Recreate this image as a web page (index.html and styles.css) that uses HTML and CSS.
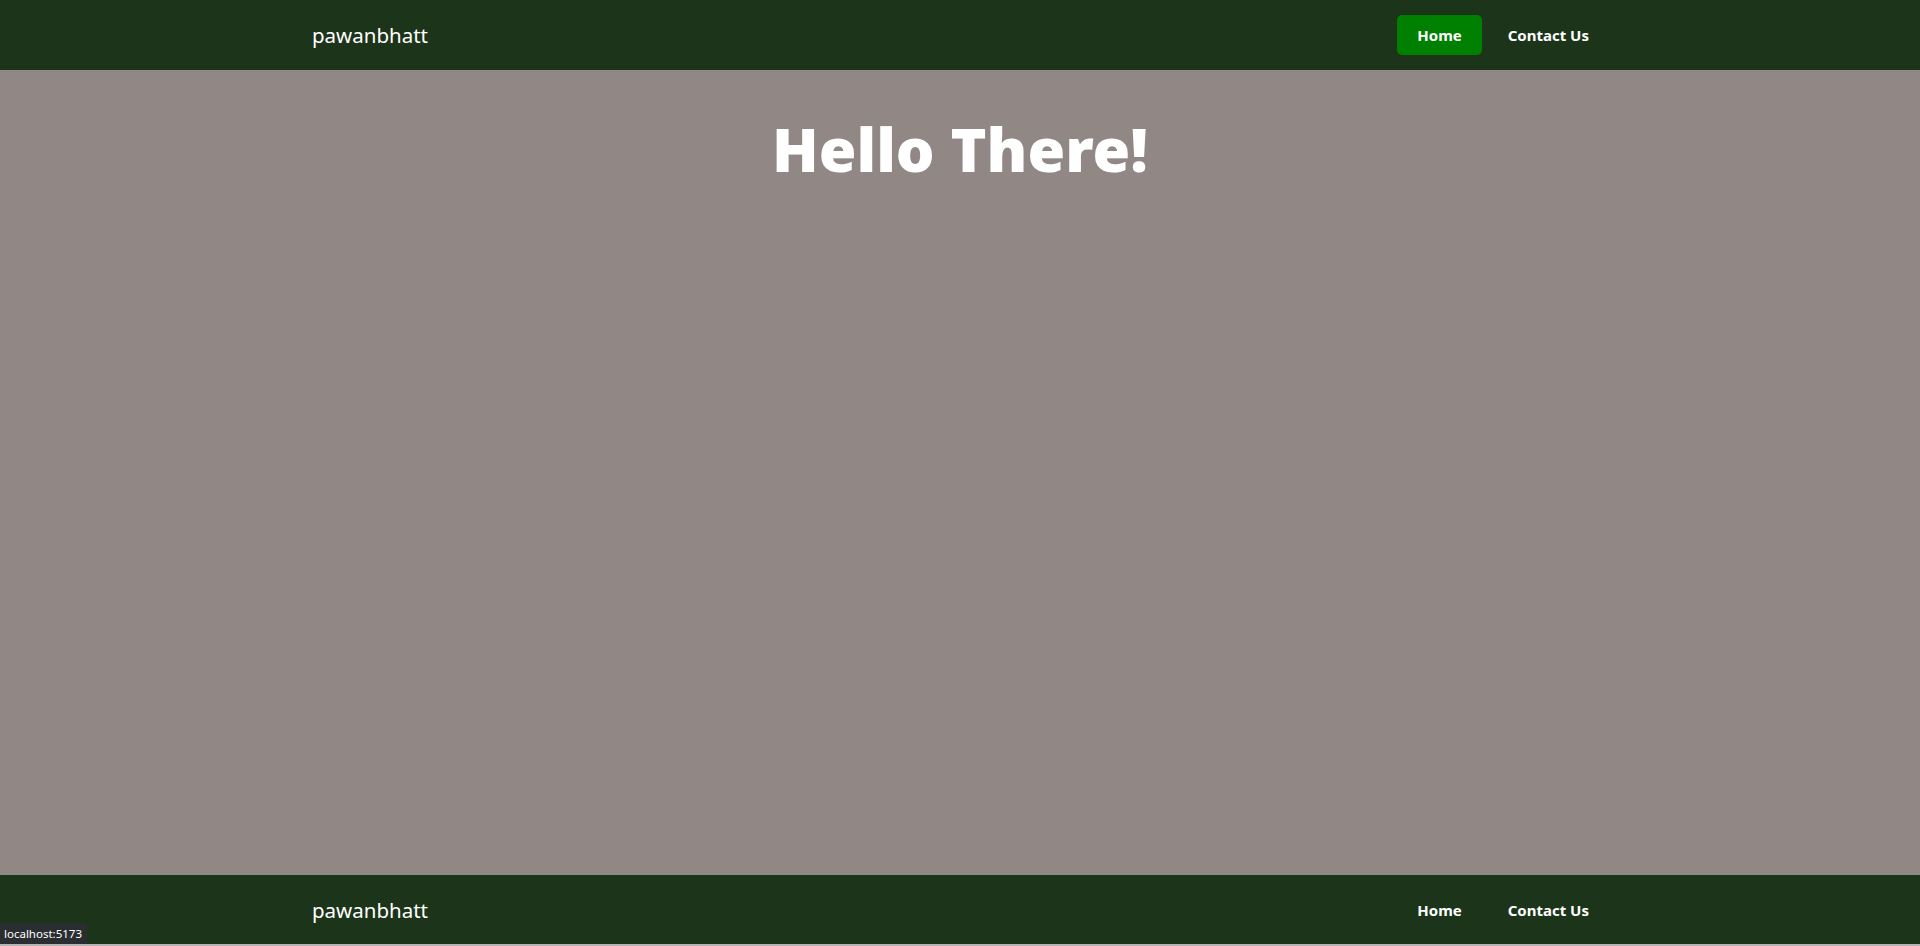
FILE: index.html
```html
<!DOCTYPE html>
<html lang="en">
<head>
<meta charset="utf-8">
<title>pawanbhatt</title>
<link rel="stylesheet" href="styles.css">
</head>
<body>
<div class="page">
  <header class="bar">
    <div class="container">
      <a class="brand" href="#">pawanbhatt</a>
      <nav class="nav">
        <a class="nav-link active" href="#">Home</a>
        <a class="nav-link" href="#">Contact Us</a>
      </nav>
    </div>
  </header>
  <main class="main">
    <h1 class="title">Hello There!</h1>
  </main>
  <footer class="bar footer">
    <div class="container">
      <a class="brand" href="#">pawanbhatt</a>
      <nav class="nav">
        <a class="nav-link" href="#">Home</a>
        <a class="nav-link" href="#">Contact Us</a>
      </nav>
    </div>
  </footer>
</div>
<div class="status">localhost:5173</div>
</body>
</html>
```

FILE: styles.css
```css
html, body {
  margin: 0;
  padding: 0;
  height: 100%;
}
body {
  background: #b4b4b4;
  font-family: "Noto Sans", "Open Sans", sans-serif;
  color: #fff;
}
.page {
  display: flex;
  flex-direction: column;
  height: 944px;
}
.bar {
  background: #1c351a;
  height: 70px;
  display: flex;
  align-items: center;
  flex: none;
}
.footer {
  height: 69px;
}
.container {
  width: 1300px;
  margin: 0 auto;
  display: flex;
  align-items: center;
  justify-content: space-between;
}
.brand {
  color: #fff;
  text-decoration: none;
  font-size: 20.5px;
  padding-left: 2px;
}
.nav {
  display: flex;
  gap: 6px;
}
.nav-link {
  color: #fff;
  text-decoration: none;
  font-weight: 700;
  font-size: 15px;
  padding: 10px 20px;
  border-radius: 5px;
}
.nav-link:last-child {
  margin-right: 1px;
}
.nav-link.active {
  background: #008000;
}
.main {
  flex: 1;
  background: #918886;
  display: flex;
  flex-direction: column;
  align-items: center;
}
.title {
  margin: 42px 0 0;
  font-size: 61px;
  font-weight: 900;
  font-family: "Noto Sans", "Open Sans", sans-serif;
  line-height: 1.2;
}
.status {
  position: fixed;
  left: 0;
  bottom: 2px;
  background: #2b2e31;
  color: #fff;
  font-family: "Noto Sans", sans-serif;
  font-size: 11.5px;
  padding: 3px 5px 3px 4px;
  border-top-right-radius: 3px;
}
```
